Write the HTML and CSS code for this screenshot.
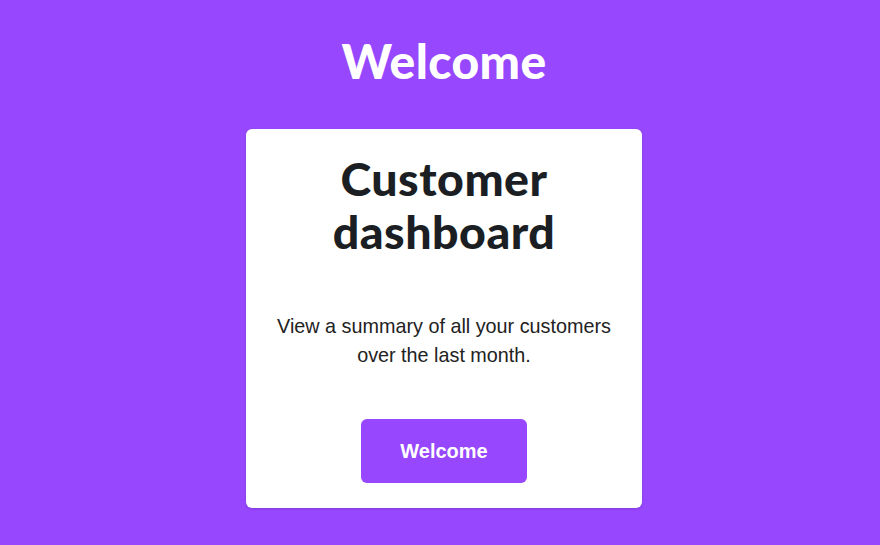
FILE: index.html
```html
<!DOCTYPE html>
<html>
<head>
<meta charset="utf-8">
<link rel="stylesheet" href="styles.css">
</head>
<body>
<main class="page">
  <h1 class="title">Welcome</h1>
  <section class="card">
    <h2 class="card-title">Customer dashboard</h2>
    <p class="card-text">View a summary of all your customers over the last month.</p>
    <button class="btn">Welcome</button>
  </section>
</main>
</body>
</html>
```

FILE: styles.css
```css
html, body {
  margin: 0;
  padding: 0;
  background: #9747fd;
  height: 100%;
}
.page {
  display: flex;
  flex-direction: column;
  align-items: center;
  padding-top: 30px;
  padding-left: 8px;
}
.title {
  margin: 0;
  font-family: Lato, "Noto Sans", sans-serif;
  font-weight: 900;
  font-size: 48px;
  line-height: 62px;
  color: #ffffff;
  letter-spacing: 0.4px;
}
.card {
  margin-top: 37px;
  width: 396px;
  box-sizing: border-box;
  background: #ffffff;
  border-radius: 6px;
  box-shadow: 0 1px 3px rgba(0,0,0,0.15);
  display: flex;
  flex-direction: column;
  align-items: center;
  padding: 23px 20px 25px;
}
.card-title {
  margin: 0;
  font-family: Lato, "Noto Sans", sans-serif;
  font-weight: 900;
  font-size: 46.5px;
  line-height: 53px;
  color: #1b1f24;
  text-align: center;
  width: 260px;
  letter-spacing: 0.5px;
}
.card-text {
  margin: 54px 0 0;
  font-family: "Liberation Sans", Arial, sans-serif;
  font-size: 19.8px;
  line-height: 29px;
  color: #222222;
  text-align: center;
  width: 350px;
}
.btn {
  margin-top: 49px;
  width: 166px;
  height: 64px;
  border: none;
  border-radius: 6px;
  background: #9747fd;
  color: #ffffff;
  font-family: "Liberation Sans", Arial, sans-serif;
  font-weight: 700;
  font-size: 20px;
  cursor: pointer;
}
```
